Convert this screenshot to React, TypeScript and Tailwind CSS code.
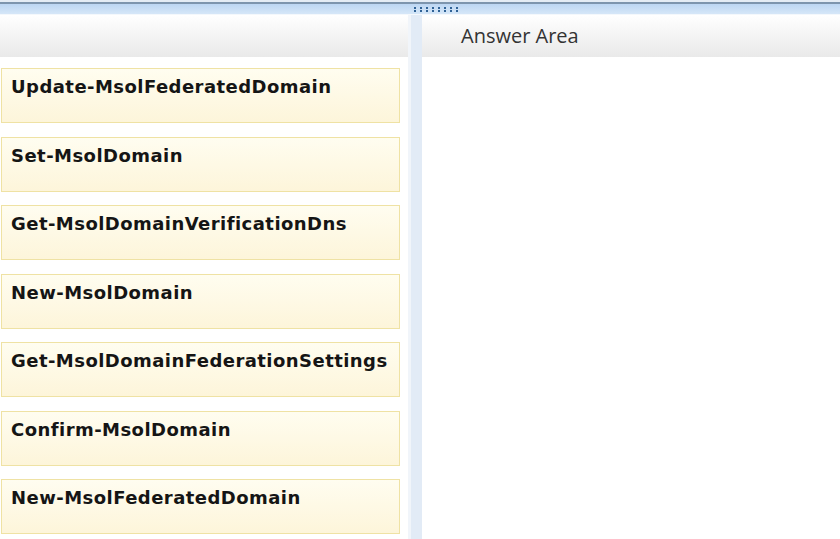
import React from "react";

const items = [
  "Update-MsolFederatedDomain",
  "Set-MsolDomain",
  "Get-MsolDomainVerificationDns",
  "New-MsolDomain",
  "Get-MsolDomainFederationSettings",
  "Confirm-MsolDomain",
  "New-MsolFederatedDomain",
];

export default function App() {
  return (
    <div className="w-[840px] h-[539px] overflow-hidden bg-white flex flex-col">
      {/* top bar */}
      <div className="h-[15px] flex flex-col shrink-0">
        <div className="h-[2px] bg-[#e4ecf4]" />
        <div className="h-[2px] bg-[#7d95ad]" />
        <div className="h-[10px] bg-gradient-to-b from-[#bcd6f2] to-[#d6e7f8] flex items-center pl-[414px]">
          <div className="flex gap-[4px]">
            {Array.from({ length: 8 }).map((_, i) => (
              <div key={i} className="flex flex-col gap-[1px]">
                <div className="w-[2px] h-[2px] bg-[#2f6296]" />
                <div className="w-[2px] h-[2px] bg-[#2f6296]" />
              </div>
            ))}
          </div>
        </div>
        <div className="h-[1px] bg-[#f4f8fc]" />
      </div>
      {/* body */}
      <div className="flex flex-1 min-h-0">
        <div className="w-[408px] shrink-0 flex flex-col">
          <div className="h-[42px] bg-gradient-to-b from-[#ffffff] to-[#e9e9e9] shrink-0" />
          <div className="flex flex-col gap-[13.5px] pt-[11px] pl-[1px]">
            {items.map((t) => (
              <div
                key={t}
                className="w-[399px] h-[55px] border border-[#efe2a4] bg-gradient-to-b from-[#fffdf0] to-[#fdf5da] pl-[9px] pt-[6px]"
              >
                <span className="font-['DejaVu_Sans',sans-serif] font-bold text-[18px] leading-[22px] text-[#151515] tracking-[0.45px]">
                  {t}
                </span>
              </div>
            ))}
          </div>
        </div>
        <div className="w-[14px] shrink-0 flex">
          <div className="w-[3px] bg-[#f1f5fa]" />
          <div className="flex-1 bg-[#e2ebf6]" />
        </div>
        <div className="flex-1 flex flex-col">
          <div className="h-[42px] bg-gradient-to-b from-[#ffffff] to-[#e9e9e9] shrink-0 flex items-center pl-[39px]">
            <span className="font-['Open_Sans',sans-serif] text-[20px] text-[#333333]">Answer Area</span>
          </div>
        </div>
      </div>
    </div>
  );
}
